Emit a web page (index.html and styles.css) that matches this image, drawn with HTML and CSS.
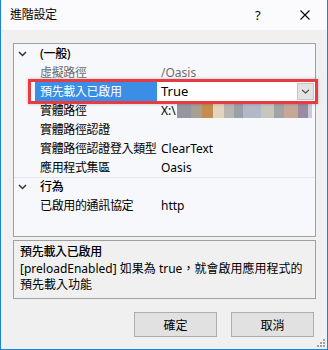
FILE: index.html
```html
<!DOCTYPE html>
<html lang="zh-Hant">
<head>
<meta charset="utf-8">
<title>進階設定</title>
<link rel="stylesheet" href="styles.css">
</head>
<body>
<div class="window">
  <div class="titlebar">
    <span class="title">進階設定</span>
    <span class="help">?</span>
    <span class="close"><svg width="10" height="10" viewBox="0 0 10 10"><path d="M0.5 0.5 L9.5 9.5 M9.5 0.5 L0.5 9.5" stroke="#000" stroke-width="1.1" fill="none"/></svg></span>
  </div>
  <div class="content">
    <div class="grid">
      <div class="row cat">
        <span class="margin"><svg width="9" height="6" viewBox="0 0 9 6"><path d="M1 1 L4.5 4.5 L8 1" stroke="#333" stroke-width="1.5" fill="none"/></svg></span>
        <span class="catname">(一般)</span>
      </div>
      <div class="row">
        <span class="margin"></span><span class="name ro">虛擬路徑</span><span class="value ro">/Oasis</span>
      </div>
      <div class="row">
        <span class="margin"></span><span class="name selected">預先載入已啟用</span>
        <span class="value editing">True<span class="dropbtn"><svg width="9" height="5" viewBox="0 0 9 5"><path d="M1 0.8 L4.5 4 L8 0.8" stroke="#444" stroke-width="1.1" fill="none"/></svg></span></span>
      </div>
      <div class="row">
        <span class="margin"></span><span class="name">實體路徑</span><span class="value">X:\<span class="blur"></span></span>
      </div>
      <div class="row">
        <span class="margin"></span><span class="name">實體路徑認證</span><span class="value"></span>
      </div>
      <div class="row">
        <span class="margin"></span><span class="name">實體路徑認證登入類型</span><span class="value">ClearText</span>
      </div>
      <div class="row">
        <span class="margin"></span><span class="name">應用程式集區</span><span class="value">Oasis</span>
      </div>
      <div class="row cat sep">
        <span class="margin"><svg width="9" height="6" viewBox="0 0 9 6"><path d="M1 1 L4.5 4.5 L8 1" stroke="#333" stroke-width="1.5" fill="none"/></svg></span>
        <span class="catname">行為</span>
      </div>
      <div class="row">
        <span class="margin"></span><span class="name">已啟用的通訊協定</span><span class="value">http</span>
      </div>
      <div class="highlight"></div>
    </div>
    <div class="desc">
      <div class="desc-title">預先載入已啟用</div>
      <div class="desc-text">[preloadEnabled] 如果為 true，就會啟用應用程式的<br>預先載入功能</div>
    </div>
    <div class="buttons">
      <button class="btn">確定</button>
      <button class="btn">取消</button>
    </div>
  </div>
  <div class="grip"><svg width="9" height="9" viewBox="0 0 9 9"><g fill="#a0a0a0"><rect x="6" y="0" width="2" height="2"/><rect x="3" y="3" width="2" height="2"/><rect x="6" y="3" width="2" height="2"/><rect x="0" y="6" width="2" height="2"/><rect x="3" y="6" width="2" height="2"/><rect x="6" y="6" width="2" height="2"/></g></svg></div>
</div>
</body>
</html>
```

FILE: styles.css
```css
html, body {
  margin: 0;
  padding: 0;
}
body {
  font-family: "Noto Sans", "Noto Sans CJK TC", sans-serif;
  font-size: 12px;
  color: #000;
}
.window {
  position: relative;
  width: 328px;
  height: 350px;
  box-sizing: border-box;
  border: 1px solid #1883d7;
  border-top: none;
  background: #f0f0f0;
  display: flex;
  flex-direction: column;
}
.titlebar {
  height: 30px;
  flex: none;
  background: #fbfbfe;
  display: flex;
  align-items: center;
  padding-left: 9px;
}
.title {
  flex: 1;
  line-height: 16px;
  letter-spacing: -0.3px;
}
.help {
  width: 12px;
  font-size: 13px;
  margin-right: 33px;
  line-height: 16px;
}
.close {
  width: 10px;
  height: 10px;
  margin-right: 17px;
  display: flex;
}
.content {
  padding: 13px 11px 0 12px;
  display: flex;
  flex-direction: column;
}
.grid {
  position: relative;
  height: 194px;
  box-sizing: border-box;
  border: 1px solid #a0a0a0;
  background: #f7f8fc;
}
.row {
  display: flex;
  height: 19px;
  align-items: center;
}
.row.sep {
  box-shadow: inset 0 1px 0 #e6e8ef;
}
.margin {
  width: 21px;
  height: 19px;
  flex: none;
  display: flex;
  align-items: center;
  padding-left: 4px;
  box-sizing: border-box;
}
.catname {
  padding-left: 5px;
  font-weight: 500;
  line-height: 19px;
  letter-spacing: -0.3px;
}
.name {
  width: 122px;
  flex: none;
  height: 19px;
  line-height: 19px;
  padding-left: 5px;
  box-sizing: border-box;
  white-space: nowrap;
  overflow: hidden;
  letter-spacing: -0.35px;
}
.value {
  flex: 1;
  height: 19px;
  line-height: 19px;
  padding-left: 4px;
  white-space: nowrap;
  display: flex;
  align-items: center;
}
.ro {
  color: #6d6d6d;
}
.name.selected {
  background: #3a8ee6;
  color: #fff;
}
.value.editing {
  background: #fff;
  font-size: 13px;
}
.dropbtn {
  margin-left: auto;
  margin-right: 1px;
  width: 17px;
  height: 17px;
  box-sizing: border-box;
  border: 1px solid #c4c4c4;
  background: #e3e3e3;
  display: flex;
  align-items: center;
  justify-content: center;
}
.blur {
  display: inline-block;
  width: 135px;
  height: 15px;
  margin-left: 1px;
  background: linear-gradient(to right,
    #9497a0 0, #9497a0 14px,
    #a79e94 14px, #a79e94 25px,
    #c28d4f 25px, #c28d4f 36px,
    #e3d4bd 36px, #e3d4bd 47px,
    #b9b5b1 47px, #b9b5b1 57px,
    #9aa0a9 57px, #9aa0a9 66px,
    #b3b8c9 66px, #b3b8c9 84px,
    #c6c6bf 84px, #c6c6bf 97px,
    #a3a3a3 97px, #a3a3a3 107px,
    #c6a697 107px, #c6a697 121px,
    #9a8aa2 121px, #9a8aa2 131px,
    #c8cad8 131px, #c8cad8 135px);
}
.highlight {
  position: absolute;
  left: 14px;
  top: 35px;
  width: 290px;
  height: 25px;
  box-sizing: border-box;
  border: 3px solid #e73a41;
  box-shadow: 0 0 3px rgba(0, 0, 0, 0.25);
}
.desc {
  margin-top: 3px;
  height: 59px;
  box-sizing: border-box;
  border: 1px solid #a0a0a0;
  padding: 2px 6px 0 6px;
}
.desc-title {
  line-height: 17px;
  font-weight: 500;
  margin-bottom: 1px;
  letter-spacing: -0.3px;
}
.desc-text {
  line-height: 16px;
}
.buttons {
  margin-top: 13px;
  display: flex;
  justify-content: flex-end;
  gap: 14px;
  padding-right: 2px;
}
.btn {
  width: 83px;
  height: 25px;
  box-sizing: border-box;
  border: 1px solid #adadad;
  background: #e1e1e1;
  font-family: "Noto Sans", "Noto Sans CJK TC", sans-serif;
  font-size: 12px;
  color: #000;
  padding: 0;
}
.grip {
  position: absolute;
  right: 1px;
  bottom: 1px;
  width: 9px;
  height: 9px;
  display: flex;
}
```
